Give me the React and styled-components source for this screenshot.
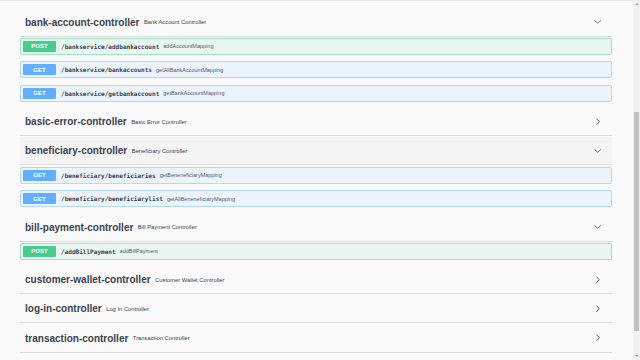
import React from 'react';
import styled, { createGlobalStyle, css } from 'styled-components';

const GlobalStyle = createGlobalStyle`
  html, body {
    margin: 0;
    padding: 0;
    background: #fafafa;
    font-family: "Liberation Sans", Arial, sans-serif;
    color: #3b4151;
  }
`;

const METHOD_COLORS = {
  POST: { main: '#49cc90', bg: '#e8f6f0', border: '#a3e2c4' },
  GET: { main: '#61affe', bg: '#ebf3fb', border: '#b5d7fb' },
};

const tags = [
  {
    name: 'bank-account-controller',
    desc: 'Bank Account Controller',
    open: true,
    ops: [
      { method: 'POST', path: '/bankservice/addbankaccount', summary: 'addAccountMapping' },
      { method: 'GET', path: '/bankservice/bankaccounts', summary: 'getAllBankAccountMapping' },
      { method: 'GET', path: '/bankservice/getbankaccount', summary: 'getBankAccountMapping' },
    ],
  },
  { name: 'basic-error-controller', desc: 'Basic Error Controller' },
  {
    name: 'beneficiary-controller',
    desc: 'Beneficiary Controller',
    open: true,
    hover: true,
    ops: [
      { method: 'GET', path: '/beneficiary/beneficiaries', summary: 'getBeneneficiaryMapping' },
      { method: 'GET', path: '/beneficiary/beneficiarylist', summary: 'getAllBeneneficiaryMapping' },
    ],
  },
  {
    name: 'bill-payment-controller',
    desc: 'Bill Payment Controller',
    open: true,
    ops: [{ method: 'POST', path: '/addBillPayment', summary: 'addBillPayment' }],
  },
  { name: 'customer-wallet-controller', desc: 'Customer Wallet Controller' },
  { name: 'log-in-controller', desc: 'Log In Controller' },
  { name: 'transaction-controller', desc: 'Transaction Controller' },
];

// scrollbar thumb, page is scrolled down
const scroll = { top: 104, height: 219 };

const Page = styled.div`
  display: flex;
  height: 360px;
  overflow: hidden;
`;

const Main = styled.main`
  flex: 1;
  min-width: 0;
  border-top: 1px solid #e9e9e9;
  padding: 7.5px 21px 0 20px;
`;

const TagSection = styled.section`
  display: flex;
  flex-direction: column;
`;

const Tag = styled.h3`
  display: flex;
  align-items: center;
  height: 27px;
  margin: 0 0 1.2px;
  padding: 0 11px 0 5px;
  border-bottom: 1px solid #dddddd;
  background: ${({ $hover }) => ($hover ? '#f4f4f4' : 'transparent')};
  cursor: pointer;
`;

const TagName = styled.span`
  font-size: 10px;
  font-weight: 700;
  color: #3b4151;
`;

const TagDesc = styled.small`
  flex: 1;
  padding-left: 4.5px;
  font-size: 5.8px;
  font-weight: 400;
  color: #3b4151;
`;

const Arrow = styled.svg`
  width: 7.5px;
  height: 7.5px;
  fill: #3b4151;
  ${({ $open }) =>
    !$open &&
    css`
      transform: rotate(-90deg);
    `}
`;

const OpBlock = styled.div`
  display: flex;
  align-items: center;
  height: 15px;
  margin-bottom: 6.5px;
  padding: 0 2px;
  border: 1px solid ${({ $method }) => METHOD_COLORS[$method].border};
  border-radius: 2px;
  background: ${({ $method }) => METHOD_COLORS[$method].bg};
  box-shadow: 0 0 1px rgba(0, 0, 0, 0.08);
`;

const Method = styled.span`
  display: flex;
  align-items: center;
  justify-content: center;
  width: 33px;
  height: 11px;
  border-radius: 1px;
  background: ${({ $method }) => METHOD_COLORS[$method].main};
  color: #fff;
  font-size: 6px;
  font-weight: 700;
`;

const Path = styled.span`
  padding: 0 4px 0 5px;
  font-family: "DejaVu Sans Mono", "Liberation Mono", monospace;
  font-size: 6.05px;
  font-weight: 700;
  color: #3b4151;
`;

const Summary = styled.span`
  font-size: 5.5px;
  color: #555a66;
`;

const Track = styled.div`
  display: flex;
  flex-direction: column;
  width: 7px;
  background: #f1f1f1;
`;

const ArrowBox = styled.div`
  display: flex;
  align-items: center;
  justify-content: center;
  height: 8px;
`;

const Triangle = styled.span`
  width: 0;
  height: 0;
  border-left: 2px solid transparent;
  border-right: 2px solid transparent;
  ${({ $down }) =>
    $down ? 'border-top: 2px solid #a3a3a3;' : 'border-bottom: 2px solid #a3a3a3;'}
`;

const Lane = styled.div`
  flex: 1;
  padding: 0 1px 0 1px;
`;

const Thumb = styled.div`
  width: 5px;
  background: #c1c1c1;
`;

const Chevron = ({ open }) => (
  <Arrow $open={open} viewBox="0 0 20 20">
    <path d="M17.418 6.109c.272-.268.709-.268.979 0s.271.701 0 .969l-7.908 7.83c-.27.268-.707.268-.979 0l-7.908-7.83c-.27-.268-.27-.701 0-.969.271-.268.709-.268.979 0L10 13.25l7.418-7.141z" />
  </Arrow>
);

const Operation = ({ method, path, summary }) => (
  <OpBlock $method={method}>
    <Method $method={method}>{method}</Method>
    <Path>{path}</Path>
    <Summary>{summary}</Summary>
  </OpBlock>
);

const TagGroup = ({ name, desc, open, hover, ops }) => (
  <TagSection>
    <Tag $hover={hover}>
      <TagName>{name}</TagName>
      <TagDesc>{desc}</TagDesc>
      <Chevron open={open} />
    </Tag>
    {open && ops.map((op) => <Operation key={op.method + op.path} {...op} />)}
  </TagSection>
);

const Scrollbar = () => (
  <Track>
    <ArrowBox>
      <Triangle />
    </ArrowBox>
    <Lane>
      <Thumb style={{ marginTop: scroll.top, height: scroll.height }} />
    </Lane>
    <ArrowBox>
      <Triangle $down />
    </ArrowBox>
  </Track>
);

const App = () => (
  <>
    <GlobalStyle />
    <Page>
      <Main>
        {tags.map((tag) => (
          <TagGroup key={tag.name} {...tag} />
        ))}
      </Main>
      <Scrollbar />
    </Page>
  </>
);

export default App;
